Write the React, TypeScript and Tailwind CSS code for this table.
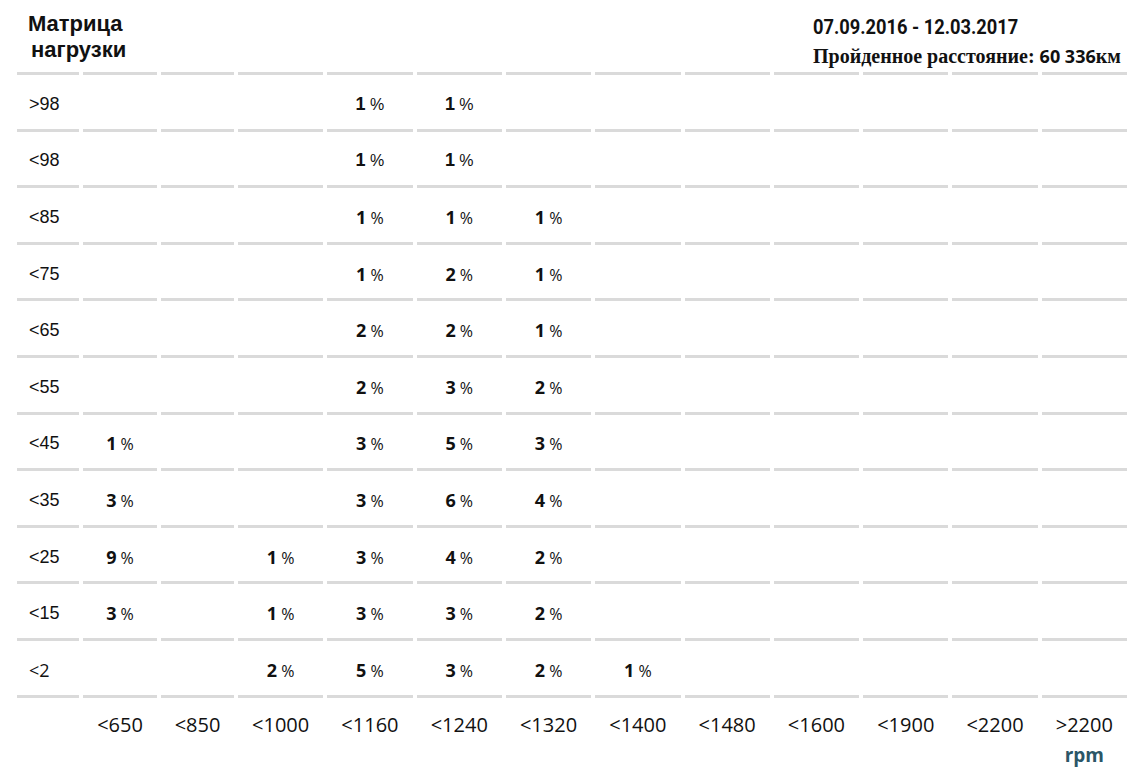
import React from "react";

const rpmCols = ["<650", "<850", "<1000", "<1160", "<1240", "<1320", "<1400", "<1480", "<1600", "<1900", "<2200", ">2200"];

// load % per rpm column (null = empty)
const matrix: { label: string; values: (number | null)[] }[] = [
  { label: ">98", values: [null, null, null, 1, 1, null, null, null, null, null, null, null] },
  { label: "<98", values: [null, null, null, 1, 1, null, null, null, null, null, null, null] },
  { label: "<85", values: [null, null, null, 1, 1, 1, null, null, null, null, null, null] },
  { label: "<75", values: [null, null, null, 1, 2, 1, null, null, null, null, null, null] },
  { label: "<65", values: [null, null, null, 2, 2, 1, null, null, null, null, null, null] },
  { label: "<55", values: [null, null, null, 2, 3, 2, null, null, null, null, null, null] },
  { label: "<45", values: [1, null, null, 3, 5, 3, null, null, null, null, null, null] },
  { label: "<35", values: [3, null, null, 3, 6, 4, null, null, null, null, null, null] },
  { label: "<25", values: [9, null, 1, 3, 4, 2, null, null, null, null, null, null] },
  { label: "<15", values: [3, null, 1, 3, 3, 2, null, null, null, null, null, null] },
  { label: "<2", values: [null, null, 2, 5, 3, 2, 1, null, null, null, null, null] },
];

const gridCols = "grid grid-cols-[62px_74px_73px_repeat(10,minmax(0,1fr))] gap-x-[4px]";

function Header() {
  return (
    <div className="flex h-[72px] items-start justify-between text-[#111]">
      <div className="pt-[11px] font-['Liberation_Sans',Arial,sans-serif] text-[22px] font-bold leading-[26px]">
        <div className="pl-[11px]">Матрица</div>
        <div className="pl-[14px]">нагрузки</div>
      </div>
      <div className="w-[314px] pt-[15px]">
        <div className="origin-left scale-x-[0.87] font-['Roboto',sans-serif] text-[21px] font-bold leading-[24px]">
          07.09.2016 - 12.03.2017
        </div>
        <div className="mt-[5px] font-['Liberation_Serif',serif] text-[20px] font-bold leading-[24px] whitespace-nowrap">
          Пройденное расстояние:{" "}
          <span className="font-['Open_Sans',sans-serif] text-[18px]">60 336</span>км
        </div>
      </div>
    </div>
  );
}

function Cell({ value, arial }: { value: number | null; arial: boolean }) {
  return (
    <div className="flex h-[56.6px] items-center justify-center border-b-[3px] border-[#dadada] pt-[5px] text-[#111]">
      {value !== null && (
        <span className={arial ? "font-['Liberation_Sans',Arial,sans-serif]" : "font-['Open_Sans',sans-serif]"}>
          <span className="text-[18px] font-bold">{value}</span>{" "}
          <span className="text-[16px]">%</span>
        </span>
      )}
    </div>
  );
}

export default function App() {
  return (
    <div className="h-[783px] w-[1135px] overflow-hidden bg-white">
      <div className="ml-[17px] w-[1110px]">
        <Header />
        <div className={gridCols}>
          {Array.from({ length: 13 }).map((_, i) => (
            <div key={i} className="h-[3px] bg-[#dadada]" />
          ))}
          {matrix.map((row, r) => (
            <React.Fragment key={row.label}>
              <div
                className={`flex h-[56.6px] items-center border-b-[3px] border-[#dadada] pl-[12px] pt-[5px] text-[18px] text-[#111] ${
                  row.label === "<2" ? "font-['Open_Sans',sans-serif]" : "font-['Liberation_Sans',Arial,sans-serif]"
                }`}
              >
                {row.label}
              </div>
              {row.values.map((v, c) => (
                <Cell key={c} value={v} arial={r < 2} />
              ))}
            </React.Fragment>
          ))}
        </div>
        <div className={`${gridCols} mt-[13px] font-['Open_Sans',sans-serif] text-[20px] leading-[28px] text-[#111]`}>
          <div />
          {rpmCols.map((c) => (
            <div key={c} className="text-center">
              {c}
            </div>
          ))}
        </div>
        <div className={`${gridCols} mt-[2px]`}>
          <div className="col-start-13 text-center font-['Open_Sans',sans-serif] text-[19px] font-bold leading-[28px] text-[#2b5667]">
            rpm
          </div>
        </div>
      </div>
    </div>
  );
}
